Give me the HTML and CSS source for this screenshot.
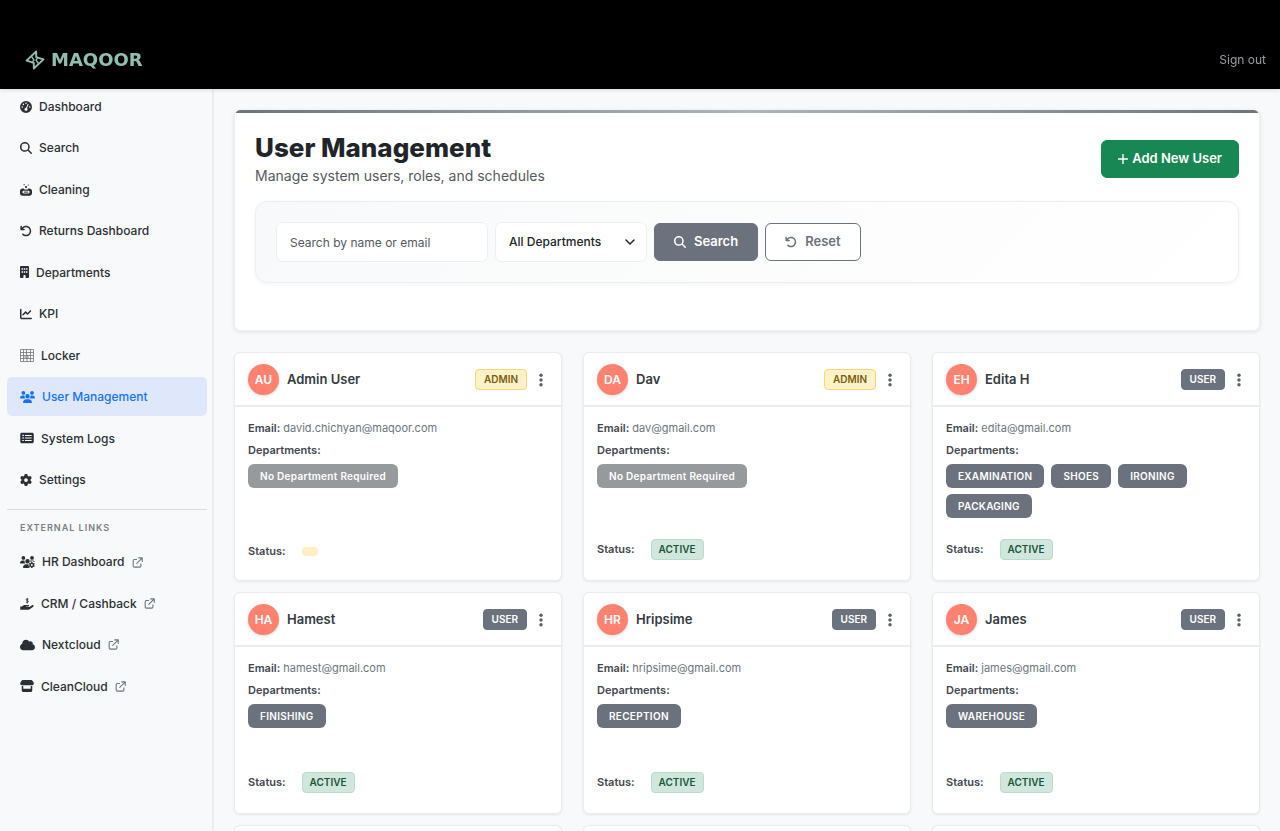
FILE: index.html
```html
<!DOCTYPE html>
<html lang="en">
<head>
<meta charset="utf-8">
<meta name="viewport" content="width=device-width, initial-scale=1">
<title>User Management</title>
<link rel="stylesheet" href="styles.css">
</head>
<body>
<svg class="sprite" aria-hidden="true">
  <symbol id="i-search" viewBox="0 0 512 512"><path d="M416 208c0 45.9-14.9 88.3-40 122.7L502.6 457.4c12.5 12.5 12.5 32.8 0 45.3s-32.8 12.5-45.3 0L330.7 376c-34.4 25.2-76.8 40-122.7 40C93.1 416 0 322.9 0 208S93.1 0 208 0S416 93.1 416 208zM208 352a144 144 0 1 0 0-288 144 144 0 1 0 0 288z"/></symbol>
  <symbol id="i-undo" viewBox="0 0 512 512"><path d="M125.7 160H176c17.7 0 32 14.3 32 32s-14.3 32-32 32H48c-17.7 0-32-14.3-32-32V64c0-17.7 14.3-32 32-32s32 14.3 32 32v51.2L97.6 97.6c87.5-87.5 229.3-87.5 316.8 0s87.5 229.3 0 316.8s-229.3 87.5-316.8 0c-12.5-12.5-12.5-32.8 0-45.3s32.8-12.5 45.3 0c62.5 62.5 163.8 62.5 226.3 0s62.5-163.8 0-226.3s-163.8-62.5-226.3 0L125.7 160z"/></symbol>
  <symbol id="i-external" viewBox="0 0 12 12"><path d="M5 2.8H2.6a1.3 1.3 0 0 0-1.3 1.3v5.6A1.3 1.3 0 0 0 2.6 11h5.8a1.3 1.3 0 0 0 1.3-1.3V7.4M7.3 1h3.9v3.9M11 1.2 5.2 7" fill="none" stroke="currentColor" stroke-width="1.2" stroke-linecap="round" stroke-linejoin="round"/></symbol>
  <symbol id="i-dots" viewBox="0 0 14 14"><circle cx="7" cy="2.2" r="1.7"/><circle cx="7" cy="7" r="1.7"/><circle cx="7" cy="11.8" r="1.7"/></symbol>
</svg>

<header class="topbar">
  <a class="brand" href="#" aria-label="MAQOOR">
    <svg class="brand-mark" viewBox="0 0 20 20" aria-hidden="true"><path d="M11.2 1.5v5.700L18.500 9.400 8.800 18.500v-5.700L1.500 10.600z" fill="none" stroke="currentColor" stroke-width="1.900" stroke-linejoin="round"/><path d="M6.500 6.500 9 10 6.800 12.800M13.500 13.500 11 10 13.200 7.200" fill="none" stroke="currentColor" stroke-width="1.300"/></svg>
    <span class="brand-name">MAQOOR</span>
  </a>
  <a class="signout" href="#">Sign out</a>
</header>

<div class="shell">
  <aside class="sidebar">
    <nav class="nav" aria-label="Main">
      <a class="nav-link" href="#"><svg class="icon" viewBox="0 0 512 512"><path fill-rule="evenodd" d="M256 0a256 256 0 1 1 0 512 256 256 0 1 1 0-512zM256 64a34 34 0 1 0 0 68 34 34 0 1 0 0-68zM144 110a34 34 0 1 0 0 68 34 34 0 1 0 0-68zM96 222a34 34 0 1 0 0 68 34 34 0 1 0 0-68zM416 222a34 34 0 1 0 0 68 34 34 0 1 0 0-68zM352 132c-12-6-26 0-32 13L262 288c-38 2-70 32-70 70 0 34 28 62 64 62s64-28 64-62c0-20-8-36-21-50l63-144c5-12 2-26-10-32z"/></svg>Dashboard</a>
      <a class="nav-link" href="#"><svg class="icon"><use href="#i-search"/></svg>Search</a>
      <a class="nav-link" href="#"><svg class="icon" viewBox="0 0 512 512"><circle cx="176" cy="30" r="26"/><circle cx="350" cy="44" r="26"/><circle cx="256" cy="130" r="46"/><path fill-rule="evenodd" d="M110 190h50c20 34 54 50 96 50 44 0 76-16 96-50h50c60 0 110 48 110 108v100c0 60-50 108-110 108H110C50 506 0 458 0 398V298c0-60 50-108 110-108zM160 290c-34 0-60 24-60 56s26 56 60 56h192c34 0 60-24 60-56s-26-56-60-56z"/><path d="M165 325h182v42H165z"/></svg>Cleaning</a>
      <a class="nav-link" href="#"><svg class="icon"><use href="#i-undo"/></svg>Returns Dashboard</a>
      <a class="nav-link" href="#"><svg class="icon icon-narrow" viewBox="0 0 384 512"><path fill-rule="evenodd" d="M48 0h288c26 0 48 22 48 48v416c0 26-22 48-48 48h-96v-80c0-26-22-48-48-48s-48 22-48 48v80H48c-26 0-48-22-48-48V48C0 22 22 0 48 0zM64 96v64h64V96zm96 0v64h64V96zm96 0v64h64V96zM64 224v64h64v-64zm96 0v64h64v-64zm96 0v64h64v-64z"/></svg>Departments</a>
      <a class="nav-link" href="#"><svg class="icon" viewBox="0 0 512 512"><path d="M64 64c0-17.7-14.3-32-32-32S0 46.3 0 64V400c0 44.2 35.8 80 80 80H480c17.7 0 32-14.3 32-32s-14.3-32-32-32H80c-8.8 0-16-7.2-16-16V64zm406.6 86.6c12.5-12.5 12.5-32.8 0-45.3s-32.8-12.5-45.3 0L320 210.7l-57.4-57.4c-12.5-12.5-32.8-12.5-45.3 0l-112 112c-12.5 12.5-12.5 32.8 0 45.3s32.8 12.5 45.3 0L240 221.3l57.4 57.4c12.5 12.5 32.8 12.5 45.3 0l128-128z"/></svg>KPI</a>
      <a class="nav-link" href="#"><svg class="icon icon-grid" viewBox="0 0 14 14"><path d="M.5 1.5h13v12H.5zM.5 4.5h13M.5 7.5h13M.5 10.5h13M3.5 1.5v12M6.5 1.5v6M10.5 1.5v12M7 6.5v7M4 9h5" fill="none" stroke="currentColor" stroke-width=".7"/></svg>Locker</a>
      <a class="nav-link is-active" href="#" aria-current="page"><svg class="icon icon-wide" viewBox="0 0 640 512"><path d="M144 0a80 80 0 1 1 0 160A80 80 0 1 1 144 0zM512 0a80 80 0 1 1 0 160A80 80 0 1 1 512 0zM0 299c0-59 48-107 107-107h43c16 0 31 3 45 10-8 62 18 92 40 118H21c-12 0-21-9-21-21zM405 320c38-34 46-72 40-118 14-7 29-10 45-10h43c59 0 107 48 107 107 0 12-9 21-21 21zM320 128a96 96 0 1 1 0 192 96 96 0 1 1 0-192zM128 485c0-74 60-133 133-133h118c73 0 133 59 133 133 0 15-12 27-27 27H155c-15 0-27-12-27-27z"/></svg>User Management</a>
      <a class="nav-link" href="#"><svg class="icon icon-mid" viewBox="0 0 576 512"><path fill-rule="evenodd" d="M64 32h448c35 0 64 29 64 64v320c0 35-29 64-64 64H64c-35 0-64-29-64-64V96c0-35 29-64 64-64zM88 120v52h66v-52zm0 108v52h66v-52zm0 108v52h66v-52zM200 124v42h288v-42zm0 110v42h288v-42zm0 110v42h288v-42z"/></svg>System Logs</a>
      <a class="nav-link" href="#"><svg class="icon" viewBox="0 0 512 512"><path d="M495.900 166.600c3.200 8.700 .5 18.400-6.400 24.600l-43.300 39.400c1.100 8.300 1.700 16.800 1.700 25.400s-.6 17.100-1.700 25.400l43.300 39.400c6.900 6.200 9.600 15.900 6.400 24.600c-4.400 11.900-9.700 23.300-15.800 34.300l-4.700 8.100c-6.600 11-14 21.400-22.100 31.200c-5.900 7.200-15.700 9.600-24.500 6.800l-55.700-17.700c-13.400 10.300-28.200 18.900-44 25.400l-12.500 57.100c-2 9.100-9 16.300-18.200 17.800c-13.800 2.300-28 3.500-42.500 3.500s-28.700-1.200-42.500-3.500c-9.200-1.500-16.200-8.700-18.200-17.800l-12.500-57.100c-15.800-6.500-30.600-15.100-44-25.400L83.100 425.900c-8.800 2.800-18.600 .3-24.500-6.800c-8.100-9.800-15.500-20.200-22.100-31.200l-4.700-8.100c-6.100-11-11.400-22.400-15.800-34.300c-3.200-8.700-.5-18.400 6.400-24.600l43.300-39.400C64.600 273.100 64 264.600 64 256s.6-17.100 1.700-25.400L22.400 191.200c-6.900-6.200-9.600-15.900-6.400-24.600c4.400-11.900 9.700-23.300 15.800-34.300l4.700-8.100c6.600-11 14-21.400 22.100-31.200c5.900-7.200 15.700-9.600 24.500-6.800l55.700 17.700c13.400-10.300 28.200-18.900 44-25.400l12.500-57.100c2-9.100 9-16.300 18.200-17.800C227.300 1.200 241.500 0 256 0s28.700 1.200 42.500 3.500c9.200 1.500 16.200 8.700 18.200 17.800l12.500 57.100c15.800 6.500 30.600 15.100 44 25.400l55.700-17.700c8.800-2.800 18.600-.3 24.500 6.800c8.100 9.800 15.500 20.200 22.100 31.200l4.700 8.100c6.100 11 11.400 22.400 15.800 34.300zM256 336a80 80 0 1 0 0-160 80 80 0 1 0 0 160z"/></svg>Settings</a>
    </nav>
    <hr class="divider">
    <h2 class="nav-title">External links</h2>
    <nav class="nav" aria-label="External links">
      <a class="nav-link" href="#"><svg class="icon icon-wide" viewBox="0 0 640 512"><path fill-rule="evenodd" d="M144 0a80 80 0 1 1 0 160A80 80 0 1 1 144 0zM512 0a80 80 0 1 1 0 160A80 80 0 1 1 512 0zM0 299c0-59 48-107 107-107h43c16 0 31 3 45 10-8 62 18 92 40 118H21c-12 0-21-9-21-21zM320 128a96 96 0 1 1 0 192 96 96 0 1 1 0-192zM128 485c0-74 60-133 133-133h105c-8 60 12 120 56 160H155c-15 0-27-12-27-27zM432 192h101c50 0 88 24 100 62l-50-14-48-24-44 14-50 20zM480 256h50l10 34 30 16 34-10 26 44-24 26v34l24 26-26 44-34-10-30 16-10 34h-50l-10-34-30-16-34 10-26-44 24-26v-34l-24-26 26-44 34 10 30-16zM506 340a42 42 0 1 0 0 84 42 42 0 1 0 0-84z"/></svg>HR Dashboard<svg class="ext"><use href="#i-external"/></svg></a>
      <a class="nav-link" href="#"><svg class="icon icon-mid" viewBox="0 0 576 512"><path d="M0 360h70l60-42c20-14 44-20 68-20h150c18 0 34 14 34 32s-16 34-34 34h-84c-10 0-14 6-14 12s6 12 14 12h126l112-84c18-14 44-10 58 8s10 44-8 58L420 468c-22 18-48 28-76 28H0z"/><path d="M346 52c-20-14-84-26-90 16-6 48 90 30 88 84-2 46-70 38-94 18M298 0v236" fill="none" stroke="currentColor" stroke-width="38"/></svg>CRM / Cashback<svg class="ext"><use href="#i-external"/></svg></a>
      <a class="nav-link" href="#"><svg class="icon icon-wide" viewBox="0 0 640 512"><path d="M0 336c0 79.500 64.500 144 144 144H512c70.700 0 128-57.300 128-128c0-61.900-44-113.600-102.400-125.400c4.100-10.700 6.400-22.400 6.400-34.600c0-53-43-96-96-96c-19.700 0-38.100 6-53.300 16.200C367 64.200 315.300 32 256 32C167.600 32 96 103.600 96 192c0 2.700 .1 5.400 .2 8.100C40.200 219.800 0 273.200 0 336z"/></svg>Nextcloud<svg class="ext"><use href="#i-external"/></svg></a>
      <a class="nav-link" href="#"><svg class="icon icon-mid" viewBox="0 0 576 512"><path fill-rule="evenodd" d="M100 0h376c16 0 28 8 36 20l56 90c28 46 0 110-54 114H62C8 220-20 156 8 110L64 20C72 8 84 0 100 0zM64 256h64v112h320V256h64v192c0 36-28 64-64 64H128c-36 0-64-28-64-64z"/></svg>CleanCloud<svg class="ext"><use href="#i-external"/></svg></a>
    </nav>
  </aside>

  <main class="content">
    <section class="panel">
      <div class="panel-head">
        <div>
          <h1 class="title">User Management</h1>
          <p class="subtitle">Manage system users, roles, and schedules</p>
        </div>
        <button class="btn btn-add" type="button"><svg class="plus" viewBox="0 0 10 10" aria-hidden="true"><path d="M5 .5v9M.5 5h9" fill="none" stroke="currentColor" stroke-width="1.400" stroke-linecap="round"/></svg>Add New User</button>
      </div>
      <form class="filters">
        <input class="field field-text" type="text" placeholder="Search by name or email" aria-label="Search by name or email">
        <div class="select-wrap">
          <select class="field field-select" aria-label="Department"><option>All Departments</option></select>
          <svg class="chevron" viewBox="0 0 10 10" aria-hidden="true"><path d="M1 3l4 4 4-4" fill="none" stroke="currentColor" stroke-width="1.500" stroke-linecap="round" stroke-linejoin="round"/></svg>
        </div>
        <button class="btn btn-search" type="button"><svg class="icon"><use href="#i-search"/></svg>Search</button>
        <button class="btn btn-reset" type="reset"><svg class="icon"><use href="#i-undo"/></svg>Reset</button>
      </form>
    </section>

    <section class="cards" aria-label="Users">
      <article class="card">
        <header class="card-head"><span class="avatar">AU</span><h2 class="name">Admin User</h2><span class="role role-admin">ADMIN</span><button class="kebab" type="button" aria-label="Actions"><svg><use href="#i-dots"/></svg></button></header>
        <div class="card-body">
          <p class="line"><b>Email:</b> david.chichyan@maqoor.com</p>
          <p class="line"><b>Departments:</b></p>
          <div class="tags"><span class="tag tag-muted">No Department Required</span></div>
          <p class="status"><b>Status:</b><span class="state state-none"></span></p>
        </div>
      </article>
      <article class="card">
        <header class="card-head"><span class="avatar">DA</span><h2 class="name">Dav</h2><span class="role role-admin">ADMIN</span><button class="kebab" type="button" aria-label="Actions"><svg><use href="#i-dots"/></svg></button></header>
        <div class="card-body">
          <p class="line"><b>Email:</b> dav@gmail.com</p>
          <p class="line"><b>Departments:</b></p>
          <div class="tags"><span class="tag tag-muted">No Department Required</span></div>
          <p class="status"><b>Status:</b><span class="state">ACTIVE</span></p>
        </div>
      </article>
      <article class="card">
        <header class="card-head"><span class="avatar">EH</span><h2 class="name">Edita H</h2><span class="role">USER</span><button class="kebab" type="button" aria-label="Actions"><svg><use href="#i-dots"/></svg></button></header>
        <div class="card-body">
          <p class="line"><b>Email:</b> edita@gmail.com</p>
          <p class="line"><b>Departments:</b></p>
          <div class="tags"><span class="tag">EXAMINATION</span><span class="tag">SHOES</span><span class="tag">IRONING</span><span class="tag">PACKAGING</span></div>
          <p class="status"><b>Status:</b><span class="state">ACTIVE</span></p>
        </div>
      </article>
      <article class="card">
        <header class="card-head"><span class="avatar">HA</span><h2 class="name">Hamest</h2><span class="role">USER</span><button class="kebab" type="button" aria-label="Actions"><svg><use href="#i-dots"/></svg></button></header>
        <div class="card-body">
          <p class="line"><b>Email:</b> hamest@gmail.com</p>
          <p class="line"><b>Departments:</b></p>
          <div class="tags"><span class="tag">FINISHING</span></div>
          <p class="status"><b>Status:</b><span class="state">ACTIVE</span></p>
        </div>
      </article>
      <article class="card">
        <header class="card-head"><span class="avatar">HR</span><h2 class="name">Hripsime</h2><span class="role">USER</span><button class="kebab" type="button" aria-label="Actions"><svg><use href="#i-dots"/></svg></button></header>
        <div class="card-body">
          <p class="line"><b>Email:</b> hripsime@gmail.com</p>
          <p class="line"><b>Departments:</b></p>
          <div class="tags"><span class="tag">RECEPTION</span></div>
          <p class="status"><b>Status:</b><span class="state">ACTIVE</span></p>
        </div>
      </article>
      <article class="card">
        <header class="card-head"><span class="avatar">JA</span><h2 class="name">James</h2><span class="role">USER</span><button class="kebab" type="button" aria-label="Actions"><svg><use href="#i-dots"/></svg></button></header>
        <div class="card-body">
          <p class="line"><b>Email:</b> james@gmail.com</p>
          <p class="line"><b>Departments:</b></p>
          <div class="tags"><span class="tag">WAREHOUSE</span></div>
          <p class="status"><b>Status:</b><span class="state">ACTIVE</span></p>
        </div>
      </article>
      <article class="card card-empty"></article>
      <article class="card card-empty"></article>
      <article class="card card-empty"></article>
    </section>
  </main>
</div>
</body>
</html>
```
FILE: styles.css
```css
* { box-sizing: border-box; }

body {
  margin: 0;
  background: #f8f9fb;
  color: #212529;
  font-family: Inter, "Liberation Sans", sans-serif;
  font-size: 13px;
  line-height: 1.5;
}

h1, h2, p { margin: 0; }
a { color: inherit; text-decoration: none; }
button, input, select { font: inherit; margin: 0; }
svg { flex: none; fill: currentColor; }
.sprite { display: none; }

/* Top bar */
.topbar {
  position: fixed;
  top: 0;
  left: 0;
  right: 0;
  z-index: 10;
  display: flex;
  align-items: center;
  justify-content: space-between;
  height: 89px;
  padding: 30px 14px 0 25px;
  background: #000;
  box-shadow: 0 1px 4px rgba(0, 0, 0, 0.12);
}
.brand { display: flex; align-items: center; gap: 6px; color: #92beb0; }
.brand-mark { width: 20px; height: 20px; }
.brand-name { font: bold 18px/20px "DejaVu Sans", sans-serif; }
.signout { color: #9a9da0; font-size: 12px; }

.shell { display: flex; min-height: 100vh; padding-top: 87px; }

/* Sidebar */
.sidebar {
  flex: none;
  width: 214px;
  padding: 0 5px 0 7px;
  border-right: 2px solid #e9ebee;
}
.nav { display: flex; flex-direction: column; gap: 3px; }
.nav-link {
  display: flex;
  align-items: center;
  gap: 7px;
  padding: 10px 13px 9px;
  border-radius: 5px;
  color: #2b2f33;
  font-size: 12px;
  font-weight: 500;
  line-height: 1.62;
}
.nav-link.is-active { background: #dfe8fb; color: #1473f5; }
.icon { width: 12px; height: 12px; }
.icon-narrow { width: 9px; }
.icon-mid { width: 14px; }
.icon-wide { width: 15px; }
.icon-grid { width: 14px; height: 14px; color: #666; }
.ext { width: 11px; height: 11px; color: #6c757d; }
.divider { margin: 11px 0 0; border: 0; border-top: 1px solid #d9dce0; }
.nav-title {
  padding: 11px 13px 8px;
  color: #7b7f84;
  font-size: 9px;
  font-weight: 600;
  line-height: 13px;
  letter-spacing: 1px;
  text-transform: uppercase;
}

/* Content */
.content { flex: 1; min-width: 0; padding: 23px 20px 0; }

.panel {
  position: relative;
  overflow: hidden;
  padding: 21px 20px 47px;
  border: 1px solid #eceef1;
  border-top: 0;
  border-radius: 6px;
  background: #fff;
  box-shadow: 0 1px 4px rgba(0, 0, 0, 0.1);
}
.panel::before {
  content: "";
  position: absolute;
  inset: 0 0 auto;
  height: 3px;
  background: linear-gradient(90deg, #6c757d, #adb5bd 50%, #6c757d);
}
.panel-head { display: flex; align-items: center; justify-content: space-between; }
.title { font-size: 26px; font-weight: 800; line-height: 34px; }
.subtitle { color: #55595e; font-size: 14px; line-height: 22px; }

.btn {
  display: inline-flex;
  align-items: center;
  justify-content: center;
  gap: 8px;
  height: 38px;
  padding: 0 19px;
  border: 1px solid #6c727d;
  border-radius: 6px;
  font-weight: 600;
}
.btn-add { gap: 4px; padding: 0 16px; border-color: #198754; background: #198754; color: #fff; }
.plus { width: 10px; height: 10px; }
.btn-search { background: #6c727d; color: #fff; }
.btn-reset { background: #fff; color: #6c727d; }

.filters {
  display: flex;
  align-items: center;
  gap: 7px;
  margin-top: 14px;
  padding: 20px;
  border: 1px solid #eceef0;
  border-radius: 12px;
  background: linear-gradient(135deg, #f8f9fa, #fff);
  box-shadow: 0 1px 4px rgba(0, 0, 0, 0.05);
}
.field {
  height: 40px;
  padding: 0 13px;
  border: 1px solid #eceef1;
  border-radius: 7px;
  background: #fff;
  color: #212529;
  font-size: 12px;
}
.field-text { width: 212px; }
.field-text::placeholder { color: #55595e; opacity: 1; }
.select-wrap { position: relative; color: #212529; }
.field-select { width: 152px; appearance: none; font-weight: 500; }
.chevron { position: absolute; top: 15px; right: 12px; width: 10px; height: 10px; pointer-events: none; }

/* User cards */
.cards {
  display: grid;
  grid-template-columns: repeat(3, minmax(0, 1fr));
  gap: 11px 21px;
  margin-top: 21px;
}
.card {
  display: flex;
  flex-direction: column;
  border: 1px solid #e9ebee;
  border-radius: 6px;
  background: #fff;
  box-shadow: 0 1px 3px rgba(0, 0, 0, 0.08);
}
.card-empty { height: 7px; border-bottom: 0; border-radius: 6px 6px 0 0; }
.card-head {
  display: flex;
  align-items: center;
  gap: 7px;
  padding: 11px 13px 10px;
  border-bottom: 2px solid #eaecef;
}
.avatar {
  display: grid;
  place-items: center;
  width: 31px;
  height: 31px;
  border-radius: 50%;
  background: #ff8270;
  color: #fff;
  font-size: 12px;
  font-weight: 600;
  box-shadow: 0 1px 3px rgba(0, 0, 0, 0.15);
}
.name { flex: 1; padding-left: 1px; color: #343a40; font-size: 13px; font-weight: 600; }
.role, .state {
  padding: 0 8px;
  border: 1px solid #6c727d;
  border-radius: 4px;
  background: #6c727d;
  color: #fff;
  font-size: 10px;
  font-weight: 600;
  line-height: 19px;
}
.role-admin { border-color: #f8d775; background: #fff2c9; color: #7a5c0c; }
.kebab { display: grid; place-items: center; width: 14px; height: 20px; padding: 0; border: 0; background: none; color: #5b6169; }
.kebab svg { width: 14px; height: 14px; }

.card-body { flex: 1; display: flex; flex-direction: column; padding: 13px 13px 20px; }
.line { margin-bottom: 5px; color: #6c757d; font-size: 11px; line-height: 17px; }
.line b, .status b { color: #41474d; font-weight: 600; }
.tags { display: flex; flex-wrap: wrap; align-content: flex-start; gap: 6px 7px; min-height: 47px; margin-bottom: 21px; }
.tag {
  padding: 0 12px;
  border-radius: 6px;
  background: #6c727d;
  color: #fff;
  font-size: 10px;
  font-weight: 600;
  line-height: 24px;
  letter-spacing: 0.03em;
}
.tag-muted { background: #979a9d; }
.status { display: flex; align-items: center; gap: 16px; margin-top: auto; font-size: 11px; line-height: 17px; }
.state { padding: 0 7px; border-color: #badbcc; background: #d1e7dd; color: #17553a; }
.state-none { width: 16px; height: 9px; border-color: #ffefc0; background: #fff0c4; }
```
